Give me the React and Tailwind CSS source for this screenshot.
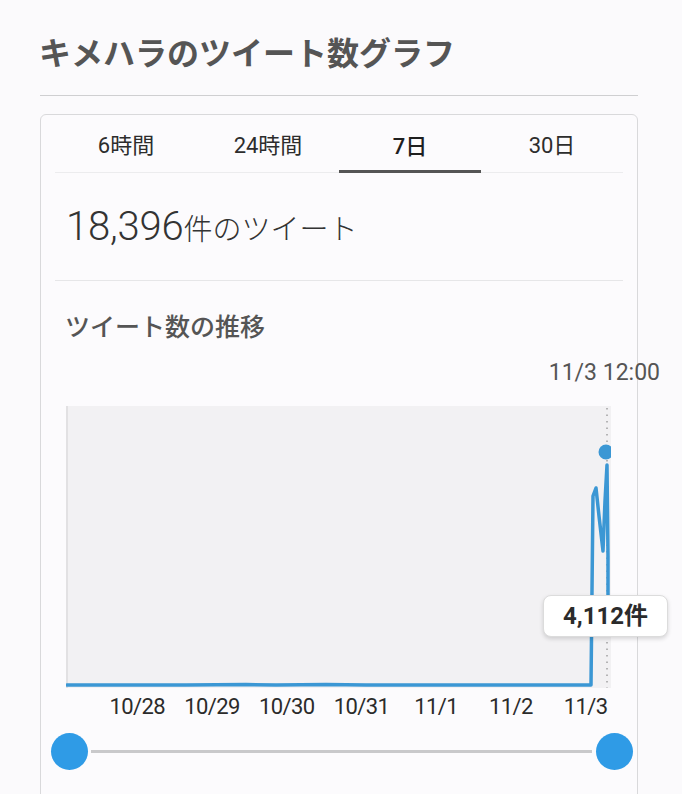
import React from 'react'

const tabs = ['6時間', '24時間', '7日', '30日']
const days = ['10/28', '10/29', '10/30', '10/31', '11/1', '11/2', '11/3']

const latin = { fontFamily: 'Roboto, "Noto Sans CJK JP", sans-serif' }
const jp = { fontFamily: '"Noto Sans CJK JP", Roboto, sans-serif' }

const Chart = () => {
    return (
        <svg width="545" height="282" viewBox="0 0 545 282" className="block">
            <rect x="0" y="0" width="545" height="282" fill="#f2f1f3" />
            <rect x="0" y="0" width="2" height="282" fill="#e2e1e3" />
            {/* hover guide */}
            <line x1="541" y1="2" x2="541" y2="282" stroke="#777" strokeWidth="1" strokeDasharray="1.5 5" />
            <path
                d="M1 279 L120 279 L180 278.5 L210 279 L260 278.5 L300 279 L420 279 L525 279 L527 90 L530 82 L533 110 L537 145 L539 95 L541 59 L542 150 L542 215"
                fill="none"
                stroke="#3b97d4"
                strokeWidth="3.5"
                strokeLinejoin="round"
                strokeLinecap="round"
            />
            <circle cx="540" cy="46" r="7.5" fill="#3b97d4" />
        </svg>
    )
}

export default function App() {
    return (
        <div className="min-h-[794px] w-full bg-[#fbfafc] overflow-hidden" style={jp}>
            <div className="ml-[40px] w-[598px]">
                {/* Title */}
                <div className="h-[95px] pt-[31px]">
                    <h1 className="text-[32px] leading-[40px] font-bold text-[#555] ml-[-1px]" style={jp}>
                        キメハラのツイート数グラフ
                    </h1>
                </div>
                <div className="h-px bg-[#cfcfd1]"></div>

                {/* Card */}
                <div className="relative mt-[18px] border border-[#d9d9db] rounded-md bg-[#fcfbfd] px-[14px] pb-[40px]">
                    {/* Tabs */}
                    <div className="flex h-[58px] border-b border-[#ececee]">
                        {tabs.map((t, idx) => (
                            <div
                                key={t}
                                className={
                                    idx === 2
                                        ? 'flex-1 flex items-center justify-center pt-[7px] border-b-[3px] border-[#555] mb-[-1px] text-[22px] text-[#1f1f1f] font-medium'
                                        : 'flex-1 flex items-center justify-center pt-[4px] text-[22px] text-[#2d2d2d]'
                                }
                                style={latin}
                            >
                                {t}
                            </div>
                        ))}
                    </div>

                    {/* Total */}
                    <div className="h-[108px] pt-[31px] pl-[11px] border-b border-[#e6e6e8]">
                        <div className="flex items-baseline leading-[46px] text-[#333]">
                            <span className="text-[40px] font-light tracking-[-0.2px]" style={latin}>18,396</span>
                            <span className="text-[29px] font-light" style={jp}>件のツイート</span>
                        </div>
                    </div>

                    {/* Trend */}
                    <div className="pt-[27px] pl-[10px]">
                        <h2 className="text-[25px] leading-[35px] font-medium text-[#555]">ツイート数の推移</h2>
                    </div>

                    <div className="mt-[16px] mr-[-37px] text-right text-[23px] leading-[28px] text-[#555]" style={latin}>
                        11/3 12:00
                    </div>

                    <div className="mt-[19px] ml-[11px]">
                        <Chart />
                    </div>

                    {/* X axis */}
                    <div className="flex mt-[6px] ml-[45px]">
                        {days.map((d) => (
                            <div key={d} className="w-[78px] text-center text-[22px] leading-[26px] tracking-[-0.6px] text-[#2b2b2b]" style={latin}>
                                {d}
                            </div>
                        ))}
                    </div>

                    {/* Range slider */}
                    <div className="flex items-center mt-[13px] ml-[-4px] mr-[-10px]">
                        <div className="w-[37px] h-[37px] rounded-full bg-[#2f9be6]"></div>
                        <div className="flex-1 h-[3px] bg-[#c9c9cb] ml-[3px] mr-[4px]"></div>
                        <div className="w-[37px] h-[37px] rounded-full bg-[#2f9be6]"></div>
                    </div>

                    {/* Tooltip */}
                    <div
                        className="absolute left-[502px] top-[480px] w-[125px] h-[42px] flex items-center justify-center rounded-lg bg-white border border-[#dcdcdc] shadow-[0_2px_4px_rgba(0,0,0,0.15)] text-[24px] font-bold text-[#2b2b2b]"
                        style={latin}
                    >
                        4,112件
                    </div>
                </div>
            </div>
        </div>
    )
}
